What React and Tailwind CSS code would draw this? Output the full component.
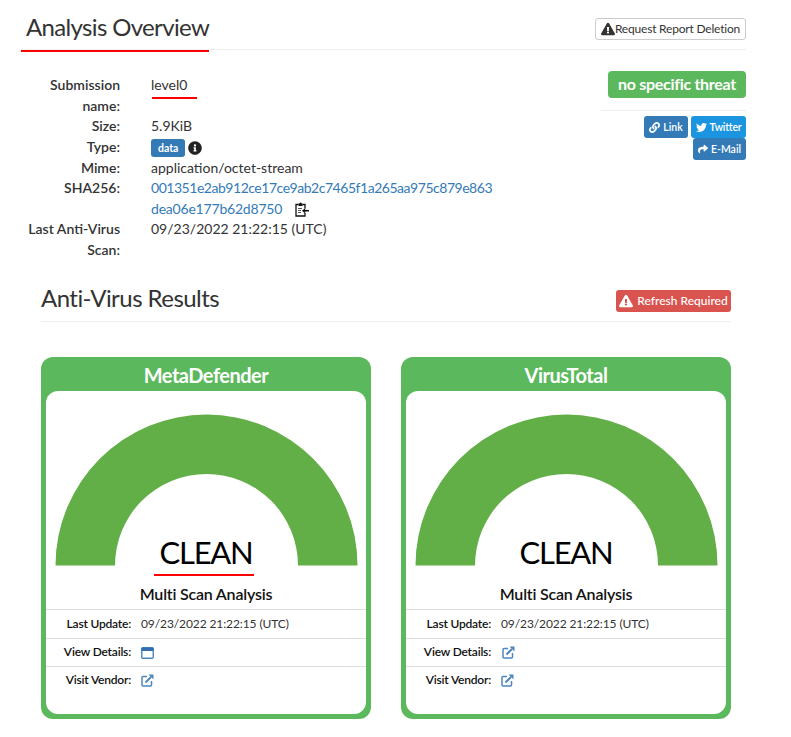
import React from "react";
import { FaExclamationTriangle, FaInfoCircle, FaLink, FaTwitter, FaShare } from "react-icons/fa";

function ExternalIcon({ className = "" }) {
  return (
    <svg width="13" height="13" viewBox="0 0 13 13" className={className} fill="none">
      <path d="M6 2.5H2a1 1 0 0 0-1 1V11a1 1 0 0 0 1 1h7.5a1 1 0 0 0 1-1V7" stroke="#4f87bd" strokeWidth="1.5" />
      <path d="M4.5 8.5 10 3" stroke="#4f87bd" strokeWidth="2" />
      <path d="M7.5 0.5H12.5V5.5Z" fill="#4f87bd" />
    </svg>
  );
}

function WindowIcon() {
  return (
    <svg width="13" height="12" viewBox="0 0 13 12" fill="none">
      <rect x="0.75" y="0.75" width="11.5" height="10.5" rx="1.2" stroke="#4f87bd" strokeWidth="1.4" />
      <rect x="0.5" y="0.5" width="12" height="3.5" rx="1" fill="#2f6fb0" />
    </svg>
  );
}

function ClipboardIcon({ className = "" }) {
  return (
    <svg width="14" height="15" viewBox="0 0 14 15" className={className} fill="none">
      <path d="M3.5 2.5H1V14H10V11" stroke="#111" strokeWidth="1.3" />
      <path d="M7.5 2.5H10V6.5" stroke="#111" strokeWidth="1.3" />
      <path d="M3.5 1.5H4.5A1 1 0 0 1 6.5 1.5H7.5V4H3.5Z" fill="#111" />
      <path d="M3 6.5H7M3 8.5H6M3 10.5H6" stroke="#555" strokeWidth="1" />
      <path d="M14 8.7H9.5" stroke="#111" strokeWidth="1.6" />
      <path d="M10.2 6 7 8.7l3.2 2.7Z" fill="#111" />
    </svg>
  );
}

function Row({ label, children }) {
  return (
    <div className="flex">
      <div className="w-[120px] shrink-0 text-right font-semibold text-[#333] pl-[20px]">{label}</div>
      <div className="pl-[31px] text-[#333]">{children}</div>
    </div>
  );
}

function Info({ label, children, h = "h-[28px]" }) {
  return (
    <div className={`flex items-center ${h} border-t border-[#ddd]`}>
      <div className="w-[85px] text-right font-semibold text-[12px] tracking-[-0.2px] text-[#111] shrink-0">{label}</div>
      <div className="pl-[10px] text-[12px] tracking-[-0.1px] text-[#333] flex items-center">{children}</div>
    </div>
  );
}

function Card({ name, details, underline }) {
  return (
    <div className="w-[330px] h-[362px] bg-[#5cb85c] rounded-[12px] px-[5px] pb-[5px] flex flex-col">
      <div className="h-[34px] pt-[2px] flex items-center justify-center text-white text-[20px] tracking-[-0.5px] font-bold">{name}</div>
      <div className="flex-1 bg-white rounded-[12px] flex flex-col relative">
        <div className="h-[175px] flex justify-center items-end relative">
          <svg width="303" height="152" viewBox="0 0 303 152" className="block">
            <path d="M0.5 151.5 A151 151 0 0 1 302.5 151.5 L243 151.5 A91.5 91.5 0 0 0 60 151.5 Z" fill="#62ae47" />
          </svg>
          <div className="absolute left-0 right-0 bottom-[-6px] text-center text-[31px] tracking-[-1.2px] leading-[40px] text-black font-normal">CLEAN</div>
        </div>
        {underline && <div className="absolute left-[108px] top-[183px] w-[100px] h-[2px] bg-[#f00]" />}
        <div className="h-[43px] pt-[15px] text-center text-[16px] tracking-[-0.2px] leading-[26px] font-semibold text-[#111]">Multi Scan Analysis</div>
        <Info label="Last Update:" h="h-[29px]">09/23/2022 21:22:15 (UTC)</Info>
        <Info label="View Details:">{details}</Info>
        <Info label="Visit Vendor:"><ExternalIcon /></Info>
      </div>
    </div>
  );
}

export default function App() {
  return (
    <div className="w-[791px] h-[737px] bg-white overflow-hidden text-[14px] leading-[20.5px] text-[#333] font-['Lato','Liberation_Sans',sans-serif]">
      <div className="w-[725px] ml-[21px] h-[50px] border-b border-[#eee] flex justify-between relative">
        <h1 className="pl-[5px] pt-[10px] text-[24px] tracking-[-0.65px] leading-[34px] font-normal text-[#333]">Analysis Overview</h1>
        <button className="mt-[18px] h-[22px] w-[151px] border border-[#ccc] rounded-[3px] text-[12px] tracking-[-0.2px] text-[#333] flex items-center justify-center">
          <FaExclamationTriangle className="text-[14px] text-[#333] shrink-0" />Request Report Deletion
        </button>
        <div className="absolute left-0 top-[50px] w-[188px] h-[2px] bg-[#f00]" />
      </div>

      <div className="flex justify-between w-[746px] pt-[25.25px] h-[240px]">
        <div className="relative">
          <Row label="Submission name:">level0</Row>
          <div className="absolute left-[152px] top-[22px] w-[45px] h-[2px] bg-[#f00]" />
          <Row label="Size:">5.9KiB</Row>
          <Row label="Type:">
            <span className="inline-flex items-center h-[20px]">
              <span className="inline-block bg-[#337ab7] text-white text-[10.5px] font-bold leading-[18px] h-[18px] px-[7px] rounded-[3px]">data</span>
              <FaInfoCircle className="ml-[3px] text-[14px] text-[#222]" />
            </span>
          </Row>
          <Row label="Mime:">application/octet-stream</Row>
          <Row label="SHA256:">
            <span className="block text-[#337ab7] tracking-[-0.47px]">001351e2ab912ce17ce9ab2c7465f1a265aa975c879e863</span>
            <span className="flex items-center"><span className="text-[#337ab7] tracking-[-0.2px]">dea06e177b62d8750</span><ClipboardIcon className="ml-[13px]" /></span>
          </Row>
          <Row label="Last Anti-Virus Scan:">09/23/2022 21:22:15 (UTC)</Row>
        </div>
        <div className="w-[145px] flex flex-col items-end -mt-[4.25px]">
          <div className="h-[27px] w-[138px] bg-[#5cb85c] rounded-[4px] text-white text-[16px] tracking-[-0.3px] font-bold flex items-center justify-center">no specific threat</div>
          <div className="w-full border-t border-[#eee] mt-[12px] mb-[5px]" />
          <div className="flex gap-[3px]">
            <span className="h-[22px] w-[44px] bg-[#337ab7] rounded-[3px] text-white text-[10.5px] font-semibold flex items-center justify-center gap-[3px]"><FaLink className="text-[11px]" />Link</span>
            <span className="h-[22px] w-[55px] bg-[#1b95e0] rounded-[3px] text-white text-[10.5px] tracking-[-0.2px] font-semibold flex items-center justify-center gap-[3px]"><FaTwitter className="text-[11px]" />Twitter</span>
          </div>
          <span className="h-[22px] w-[53px] bg-[#337ab7] rounded-[3px] text-white text-[10.5px] font-semibold flex items-center justify-center gap-[3px]"><FaShare className="text-[10px]" />E-Mail</span>
        </div>
      </div>

      <div className="ml-[41px] w-[690px] h-[32px] border-b border-[#eee] flex justify-between items-start">
        <h2 className="text-[24px] tracking-[-0.55px] leading-[16px] font-normal text-[#333]">Anti-Virus Results</h2>
        <span className="h-[22px] w-[115px] bg-[#d9534f] rounded-[3px] text-white text-[12px] font-medium flex items-center justify-center gap-[4px]"><FaExclamationTriangle className="text-[14px]" />Refresh Required</span>
      </div>

      <div className="ml-[41px] mt-[35px] flex gap-[30px]">
        <Card name="MetaDefender" underline details={<WindowIcon />} />
        <Card name="VirusTotal" details={<ExternalIcon className="ml-[1px]" />} />
      </div>
    </div>
  );
}
